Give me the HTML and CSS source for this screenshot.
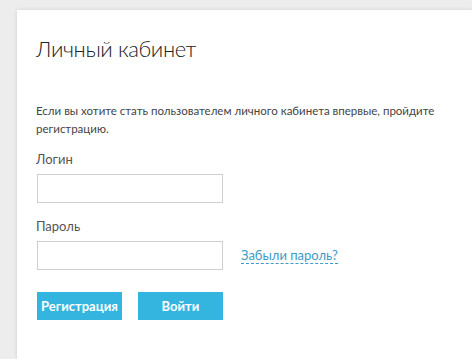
FILE: index.html
```html
<!DOCTYPE html>
<html lang="ru">
<head>
  <meta charset="UTF-8">
  <meta name="viewport" content="width=device-width, initial-scale=1.0">
  <title>Личный кабинет</title>
  <link rel="stylesheet" href="styles.css">
</head>
<body>
  <div class="card">
    <h1>Личный кабинет</h1>
    <p class="note">Если вы хотите стать пользователем личного кабинета впервые, пройдите регистрацию.</p>
    <div class="field">
      <label for="login">Логин</label>
      <input type="text" id="login">
    </div>
    <div class="field">
      <label for="pass">Пароль</label>
      <div class="row">
        <input type="password" id="pass">
        <a href="#" class="forgot">Забыли пароль?</a>
      </div>
    </div>
    <div class="buttons">
      <button class="btn">Регистрация</button>
      <button class="btn">Войти</button>
    </div>
  </div>
</body>
</html>
```

FILE: styles.css
```css
html, body {
  height: 100%;
}

body {
  font-family: Lato, 'Open Sans', Arial, sans-serif;
  background-color: #ededed;
  color: #333333;
  margin: 0;
  padding: 10px 0 0 17px;
  box-sizing: border-box;
}

.card {
  background-color: #ffffff;
  box-shadow: 0 0 4px rgba(0, 0, 0, 0.12);
  padding: 24px 19px 0 19px;
  height: 100%;
  box-sizing: border-box;
}

h1 {
  font-size: 22px;
  font-weight: 300;
  letter-spacing: -0.4px;
  color: #222222;
  margin: 0 0 38px 0;
  line-height: 30px;
}

.note {
  font-size: 11.5px;
  line-height: 18px;
  color: #444444;
  margin: 0 0 12px 0;
}

.field {
  margin-bottom: 14px;
}

.field label {
  display: block;
  font-size: 13px;
  color: #555555;
  margin-bottom: 6px;
  line-height: 18px;
}

.field input {
  width: 186px;
  height: 29px;
  box-sizing: border-box;
  border: 1px solid #cfcfcf;
  padding: 0 6px;
  margin: 0 0 0 1px;
}

.row {
  display: flex;
  align-items: center;
  gap: 18px;
}

.forgot {
  font-size: 13px;
  color: #3a9cc6;
  text-decoration: none;
  border-bottom: 1px dashed #3a9cc6;
  line-height: 16px;
}

.buttons {
  display: flex;
  gap: 16px;
  margin-top: 22px;
  padding-left: 1px;
}

.btn {
  width: 85px;
  height: 28px;
  border: none;
  background-color: #33b5e0;
  color: #ffffff;
  font-family: Lato, 'Open Sans', Arial, sans-serif;
  font-size: 13px;
  font-weight: 700;
  padding: 0;
}
```
